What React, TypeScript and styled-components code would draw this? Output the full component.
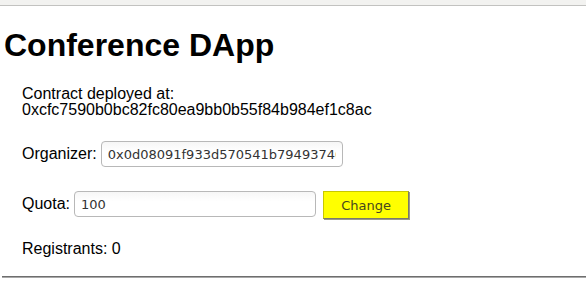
import styled, { createGlobalStyle } from "styled-components";

const GlobalStyle = createGlobalStyle`
  html, body {
    margin: 0;
    padding: 0;
    background: #ffffff;
  }
  body {
    font-family: "Liberation Sans", Arial, sans-serif;
    color: #000000;
  }
`;

const TopBar = styled.div`
  height: 5px;
  background: #f2f2f0;
  border-bottom: 1px solid #c2c2c0;
`;

const Title = styled.h1`
  font-family: "Liberation Sans", Arial, sans-serif;
  font-size: 32px;
  font-weight: 700;
  line-height: 36px;
  margin: 21px 0 0;
  padding-left: 4px;
`;

const Content = styled.section`
  padding-left: 22px;
  font-size: 16px;
`;

const Deployed = styled.p`
  margin: 23px 0 0;
  line-height: 16px;
`;

const Row = styled.div<{ $top: number }>`
  display: flex;
  align-items: center;
  gap: 4px;
  margin-top: ${({ $top }) => $top}px;
`;

const Label = styled.label`
  font-size: 16px;
  line-height: 18px;
`;

const Field = styled.input`
  box-sizing: border-box;
  width: 242px;
  height: 26px;
  padding: 0 6px;
  border: 1px solid #b8b8b8;
  border-radius: 4px;
  background: linear-gradient(#f6f6f6, #ffffff 40%);
  font-family: "DejaVu Sans", Verdana, sans-serif;
  font-size: 13px;
  color: #333333;
  outline: none;
`;

const QuotaRow = styled(Row)`
  align-items: flex-start;
  gap: 0;

  ${Label} {
    margin-top: 4px;
    margin-right: 4px;
  }
`;

const ChangeButton = styled.button`
  box-sizing: border-box;
  width: 86px;
  height: 28px;
  margin-left: 7px;
  border: 1px solid #c8c800;
  border-right-color: #7a7a6a;
  border-bottom-color: #7a7a6a;
  box-shadow: 1px 1px 0 #9a9a8a;
  background: #ffff00;
  font-family: "DejaVu Sans", Verdana, sans-serif;
  font-size: 13px;
  color: #46461e;
  cursor: pointer;
`;

const Registrants = styled.p`
  margin: 21px 0 0;
  line-height: 18px;
`;

const Divider = styled.hr`
  margin: 18px 0 0 2px;
  height: 0;
  border: none;
  border-top: 1px solid #6e6e6e;
  border-bottom: 1px solid #a8a8a8;
`;

function App() {
  const contract = "0xcfc7590b0bc82fc80ea9bb0b55f84b984ef1c8ac";
  const organizer = "0x0d08091f933d570541b79493740c8f2a1e9b3d5f";

  return (
    <>
      <GlobalStyle />
      <TopBar />
      <Title>Conference DApp</Title>
      <Content>
        <Deployed>
          Contract deployed at:
          <br />
          {contract}
        </Deployed>
        <Row $top={23}>
          <Label>Organizer:</Label>
          <Field defaultValue={organizer} />
        </Row>
        <QuotaRow $top={24}>
          <Label>Quota:</Label>
          <Field defaultValue="100" />
          <ChangeButton>Change</ChangeButton>
        </QuotaRow>
        <Registrants>Registrants: 0</Registrants>
      </Content>
      <Divider />
    </>
  );
}

export default App;
